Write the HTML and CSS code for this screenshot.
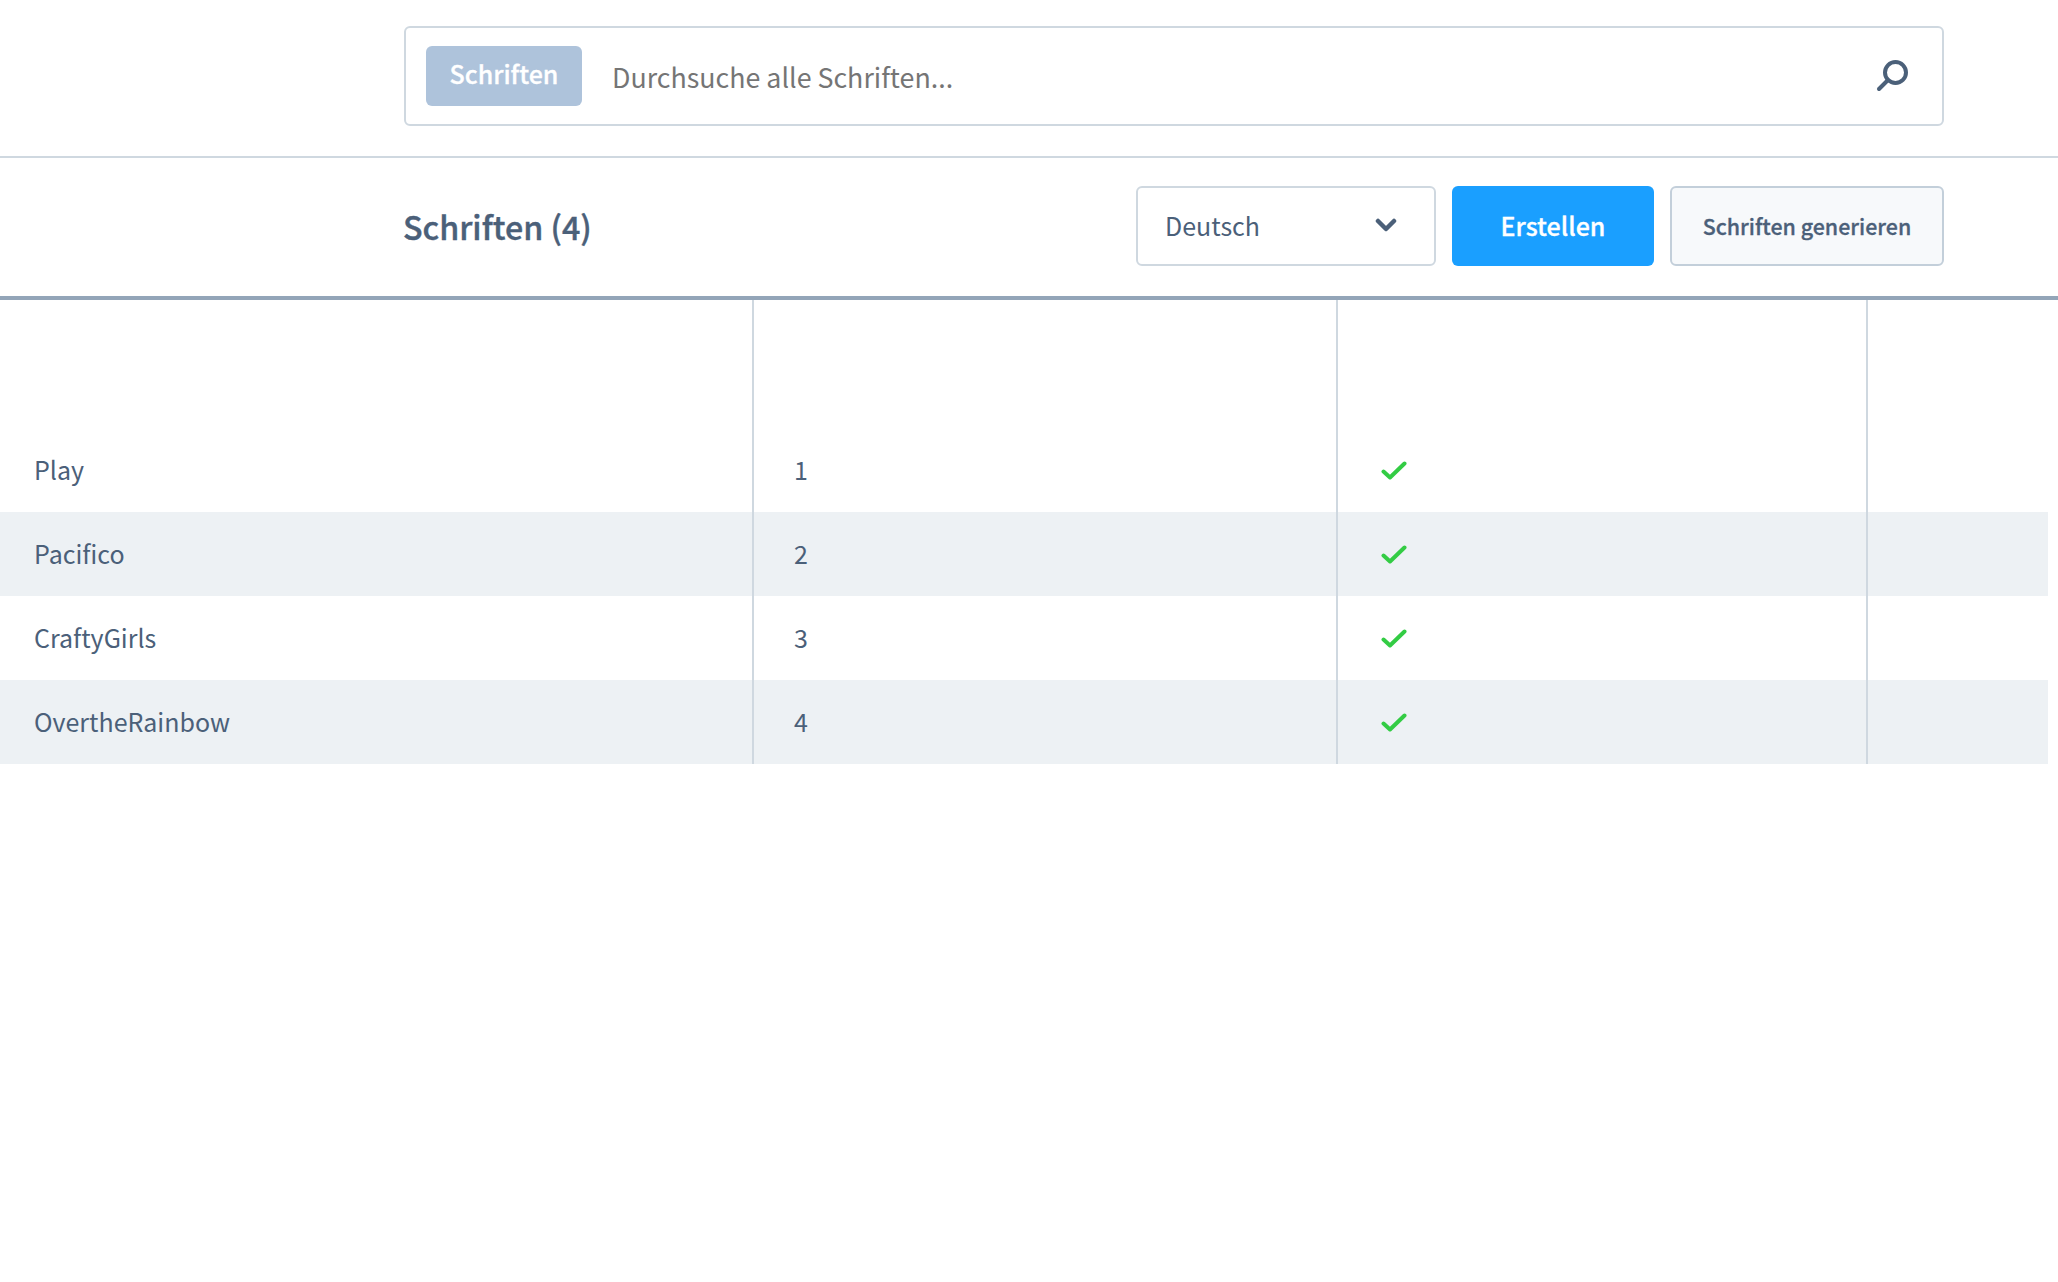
FILE: index.html
```html
<!DOCTYPE html>
<html lang="de">
    <head>
        <meta charset="UTF-8">
        <meta name="viewport" content="width=device-width, initial-scale=1.0">
        <title>Schriften</title>
        <link rel="stylesheet" href="styles.css">
    </head>
    <body>
        <div class="search-bar">
            <div class="search-box">
                <span class="search-chip">Schriften</span>
                <input class="search-input" type="text" placeholder="Durchsuche alle Schriften...">
                <svg class="search-icon" width="32" height="32" viewBox="0 0 32 32">
                    <circle cx="19.5" cy="12.5" r="10.5" fill="none" stroke="#4b6079" stroke-width="4"/>
                    <path d="M12 20 L3 29" fill="none" stroke="#4b6079" stroke-width="4" stroke-linecap="round"/>
                </svg>
            </div>
        </div>
        <div class="toolbar">
            <h1 class="page-title">Schriften (4)</h1>
            <div class="toolbar-actions">
                <div class="lang-select">
                    <span>Deutsch</span>
                    <svg width="22" height="14" viewBox="0 0 22 14">
                        <path d="M3 3 L11 11 L19 3" fill="none" stroke="#4b6079" stroke-width="4.5" stroke-linecap="round" stroke-linejoin="round"/>
                    </svg>
                </div>
                <button class="btn-create">Erstellen</button>
                <button class="btn-generate">Schriften generieren</button>
            </div>
        </div>
        <table class="font-table">
            <colgroup>
                <col class="col-name">
                <col class="col-id">
                <col class="col-active">
                <col class="col-actions">
            </colgroup>
            <thead>
                <tr>
                    <th></th>
                    <th></th>
                    <th></th>
                    <th></th>
                </tr>
            </thead>
            <tbody>
                <tr>
                    <td class="cell-name">Play</td>
                    <td class="cell-id">1</td>
                    <td class="cell-active"><svg class="check" width="26" height="20" viewBox="0 0 26 20"><path d="M2.5 10.5 L9 16.5 L23.5 2.5" fill="none" stroke="#33cc44" stroke-width="4" stroke-linecap="round" stroke-linejoin="round"/></svg></td>
                    <td></td>
                </tr>
                <tr>
                    <td class="cell-name">Pacifico</td>
                    <td class="cell-id">2</td>
                    <td class="cell-active"><svg class="check" width="26" height="20" viewBox="0 0 26 20"><path d="M2.5 10.5 L9 16.5 L23.5 2.5" fill="none" stroke="#33cc44" stroke-width="4" stroke-linecap="round" stroke-linejoin="round"/></svg></td>
                    <td></td>
                </tr>
                <tr>
                    <td class="cell-name">CraftyGirls</td>
                    <td class="cell-id">3</td>
                    <td class="cell-active"><svg class="check" width="26" height="20" viewBox="0 0 26 20"><path d="M2.5 10.5 L9 16.5 L23.5 2.5" fill="none" stroke="#33cc44" stroke-width="4" stroke-linecap="round" stroke-linejoin="round"/></svg></td>
                    <td></td>
                </tr>
                <tr>
                    <td class="cell-name">OvertheRainbow</td>
                    <td class="cell-id">4</td>
                    <td class="cell-active"><svg class="check" width="26" height="20" viewBox="0 0 26 20"><path d="M2.5 10.5 L9 16.5 L23.5 2.5" fill="none" stroke="#33cc44" stroke-width="4" stroke-linecap="round" stroke-linejoin="round"/></svg></td>
                    <td></td>
                </tr>
            </tbody>
        </table>
    </body>
</html>
```

FILE: styles.css
```css
body {
    font-family: "Noto Sans CJK SC", "Open Sans", sans-serif;
    margin: 0;
    background: #fff;
    color: #4b6079;
}
.search-bar {
    padding: 26px 114px 30px 404px;
    border-bottom: 2px solid #cfd8e0;
}
.search-box {
    display: flex;
    align-items: center;
    box-sizing: border-box;
    height: 100px;
    padding: 0 34px 0 20px;
    border: 2px solid #cfd8e0;
    border-radius: 6px;
}
.search-chip {
    width: 156px;
    height: 60px;
    line-height: 54px;
    text-align: center;
    font-size: 25px;
    font-weight: 500;
    -webkit-text-stroke: 0.3px #fff;
    color: #fff;
    background: #aec3db;
    border-radius: 6px;
}
.search-input {
    flex: 1;
    margin: 2px 0 0 30px;
    padding: 0;
    border: none;
    outline: none;
    background: transparent;
    font-family: inherit;
    font-size: 26.8px;
    line-height: 44px;
    height: 44px;
    color: #4b6079;
}
.search-input::placeholder {
    color: #757575;
    opacity: 1;
}
.toolbar {
    display: flex;
    justify-content: space-between;
    align-items: center;
    box-sizing: border-box;
    height: 142px;
    padding: 0 114px 2px 403px;
    border-bottom: 4px solid #93a5b8;
}
.page-title {
    margin: 0;
    font-size: 32.2px;
    font-weight: 500;
    -webkit-text-stroke: 0.4px #4b6079;
    line-height: 50px;
}
.toolbar-actions {
    display: flex;
    gap: 16px;
}
.lang-select {
    display: flex;
    justify-content: space-between;
    align-items: center;
    box-sizing: border-box;
    width: 300px;
    height: 80px;
    padding: 0 37px 2px 27px;
    border: 2px solid #cfd8e0;
    border-radius: 6px;
    font-size: 25px;
}
.btn-create {
    width: 202px;
    height: 80px;
    padding: 0 0 2px;
    border: none;
    border-radius: 6px;
    background: #1a9fff;
    color: #fff;
    font-family: inherit;
    font-size: 25px;
    font-weight: 500;
    -webkit-text-stroke: 0.3px #fff;
}
.btn-generate {
    width: 274px;
    height: 80px;
    padding: 0 0 2px;
    border: 2px solid #c3cfda;
    border-radius: 6px;
    background: #f7f9fb;
    color: #4b6079;
    font-family: inherit;
    font-size: 21.4px;
    font-weight: 500;
    -webkit-text-stroke: 0.3px #4b6079;
}
.font-table {
    width: 2048px;
    table-layout: fixed;
    border-collapse: separate;
    border-spacing: 0;
}
.col-name {
    width: 754px;
}
.col-id {
    width: 584px;
}
.col-active {
    width: 530px;
}
.font-table th {
    height: 128px;
    padding: 0;
}
.font-table td {
    box-sizing: border-box;
    height: 84px;
    padding: 0;
    font-size: 25px;
}
.font-table th:not(:last-child),
.font-table td:not(:last-child) {
    border-right: 2px solid #cfd8e0;
}
.font-table tbody tr:nth-child(even) {
    background: #edf1f4;
}
.font-table .cell-name {
    padding: 0 0 2px 34px;
}
.font-table .cell-id {
    padding: 0 0 2px 40px;
}
.font-table .cell-active {
    padding-left: 43px;
}
.check {
    display: block;
    margin-top: 2px;
}
```
